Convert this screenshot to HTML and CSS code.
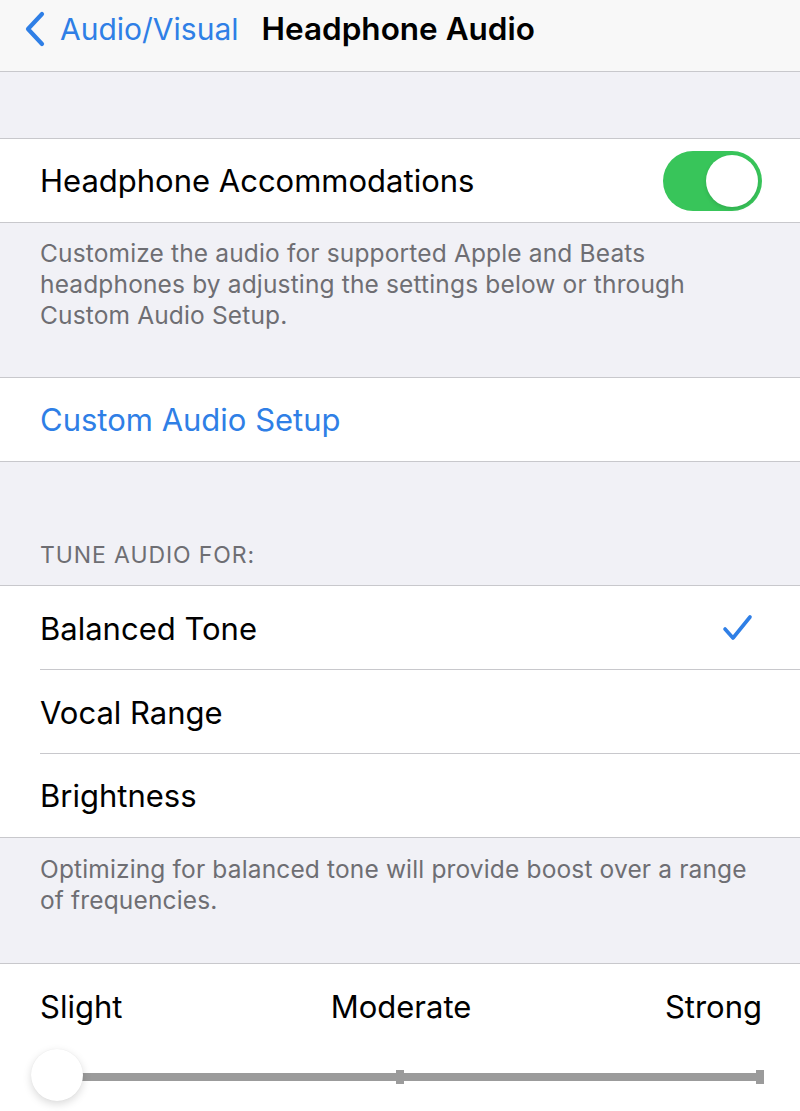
FILE: index.html
```html
<!DOCTYPE html>
<html lang="en">
<head>
<meta charset="utf-8">
<title>Headphone Audio</title>
<link rel="stylesheet" href="styles.css">
</head>
<body>
<div class="screen">
  <header class="nav">
    <a class="back">
      <svg class="chev" viewBox="0 0 22 36" width="22" height="36"><path d="M18 3 L4 18 L18 33" fill="none" stroke="#2f7fe6" stroke-width="4.2" stroke-linecap="round" stroke-linejoin="round"/></svg>
      <span class="back-label">Audio/Visual</span>
    </a>
    <h1 class="title">Headphone Audio</h1>
  </header>

  <div class="gap-top"></div>

  <section class="group">
    <div class="row">
      <span class="label">Headphone Accommodations</span>
      <span class="toggle"><span class="knob"></span></span>
    </div>
  </section>
  <p class="footer footer-1">Customize the audio for supported Apple and Beats headphones by adjusting the settings below or through Custom Audio Setup.</p>

  <section class="group">
    <div class="row"><span class="label link">Custom Audio Setup</span></div>
  </section>

  <div class="section-header">TUNE AUDIO FOR:</div>
  <section class="group">
    <div class="row inset">
      <span class="label">Balanced Tone</span>
      <svg class="check" viewBox="0 0 32 30" width="32" height="30"><path d="M3 16 L11 25 L28 4" fill="none" stroke="#2f7fe6" stroke-width="3.6" stroke-linecap="round" stroke-linejoin="round"/></svg>
    </div>
    <div class="row inset"><span class="label">Vocal Range</span></div>
    <div class="row"><span class="label">Brightness</span></div>
  </section>
  <p class="footer footer-2">Optimizing for balanced tone will provide boost over a range of frequencies.</p>

  <section class="group slider-cell">
    <div class="ticks-labels">
      <span class="lbl-start">Slight</span>
      <span class="lbl-mid">Moderate</span>
      <span class="lbl-end">Strong</span>
    </div>
    <div class="slider">
      <div class="track"></div>
      <div class="tick mid"></div>
      <div class="tick end"></div>
      <div class="thumb"></div>
    </div>
  </section>
</div>
</body>
</html>
```

FILE: styles.css
```css
* { box-sizing: border-box; }
html, body { margin: 0; padding: 0; }
body {
  background: #f1f1f6;
  font-family: Inter, "Noto Sans", "Liberation Sans", sans-serif;
  color: #000;
  width: 800px;
  height: 1111px;
  overflow: hidden;
}
.screen { width: 800px; }

.nav {
  height: 72px;
  background: #f8f8f8;
  border-bottom: 1px solid #c8c8cc;
  display: flex;
  align-items: center;
  padding: 0 0 14px 24px;
}
.back { display: flex; align-items: center; gap: 14px; }
.chev { display: block; }
.back-label {
  color: #2f7fe6;
  font-size: 30px;
}
.title {
  margin: 0 0 0 23px;
  font-size: 31.5px;
  font-weight: 600;
}

.gap-top { height: 66px; }

.group {
  background: #fff;
  border-top: 1px solid #c8c8cc;
  border-bottom: 1px solid #c8c8cc;
}
.row {
  height: 83px;
  display: flex;
  align-items: center;
  justify-content: space-between;
  padding: 0 38px 0 40px;
  position: relative;
}
.row.inset { height: 84px; }
.row.inset::after {
  content: "";
  position: absolute;
  left: 40px; right: 0; bottom: 0;
  height: 1px;
  background: #c8c8cc;
}
.label {
  font-size: 31px;
}
.link { color: #2f7fe6; }

.toggle {
  width: 99px;
  height: 60px;
  border-radius: 30px;
  background: #38c55a;
  display: flex;
  align-items: center;
  justify-content: flex-end;
  padding-right: 4px;
}
.knob {
  width: 52px;
  height: 52px;
  border-radius: 50%;
  background: #fff;
  box-shadow: 0 2px 4px rgba(0,0,0,0.12);
}

.footer {
  margin: 0;
  padding: 15px 40px 0 40px;
  font-size: 24.5px;
  line-height: 31px;
  color: #6e6e73;
  letter-spacing: 0.15px;
}
.footer-1 { height: 154px; }
.footer-2 { height: 125px; padding-top: 16px; }

.section-header {
  height: 123px;
  padding: 0 40px 16px;
  display: flex;
  align-items: flex-end;
  font-size: 23px;
  color: #6e6e73;
  letter-spacing: 0.9px;
}

.check { margin-right: 8px; }

.slider-cell {
  height: 160px;
  border-bottom: none;
  padding: 25px 36px 0 40px;
}
.ticks-labels {
  display: grid;
  grid-template-columns: 1fr auto 1fr;
  font-size: 31px;
  line-height: 36px;
  padding-right: 2px;
}
.lbl-start { justify-self: start; }
.lbl-mid { justify-self: center; }
.lbl-end { justify-self: end; }
.slider {
  position: relative;
  height: 54px;
  margin: 24px 0 0 -10px;
}
.track {
  position: absolute;
  left: 20px; right: 2px;
  top: 24px;
  height: 8px;
  background: #9b9b9b;
}
.tick {
  position: absolute;
  top: 21px;
  width: 8px;
  height: 14px;
  background: #9b9b9b;
}
.tick.mid { left: 366px; }
.tick.end { right: 0; }
.thumb {
  position: absolute;
  left: 1px; top: 0;
  width: 52px;
  height: 52px;
  border-radius: 50%;
  background: #fff;
  box-shadow: 0 3px 8px rgba(0,0,0,0.15), 0 0 1px rgba(0,0,0,0.08);
}
```
